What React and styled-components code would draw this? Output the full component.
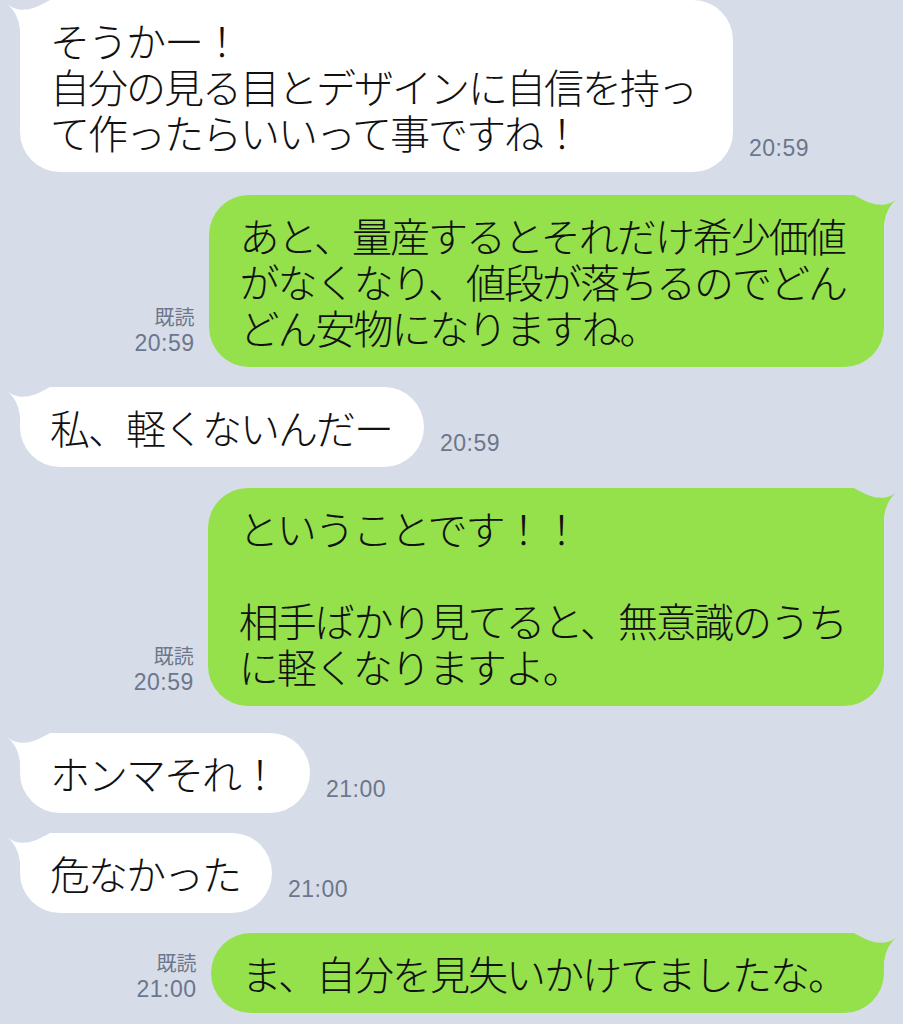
import React from 'react';
import styled, { createGlobalStyle } from 'styled-components';

const GlobalStyle = createGlobalStyle`
  html, body {
    margin: 0;
    padding: 0;
    background: #d7dde8;
  }
  body {
    width: 903px;
    height: 1024px;
    overflow: hidden;
    font-family: "Noto Sans CJK JP", sans-serif;
  }
`;

const colors = {
  in: '#ffffff',
  out: '#94e14c',
};

const Chat = styled.div`
  display: flex;
  flex-direction: column;
  padding: 0 19px 0 20px;
`;

const Row = styled.div`
  display: flex;
  align-items: flex-end;
  justify-content: ${(p) => (p.$side === 'out' ? 'flex-end' : 'flex-start')};
  gap: ${(p) => (p.$side === 'out' ? '14px' : '16px')};
  margin-top: ${(p) => p.$gap}px;
`;

const Bubble = styled.div`
  position: relative;
  box-sizing: border-box;
  background: ${(p) => colors[p.$side]};
  border-radius: 40px;
  padding: ${(p) => (p.$side === 'out' ? '17px 38px 17px 31px' : '17px 32px 17px 30px')};
  min-width: ${(p) => p.$minWidth || 0}px;
  font-family: "Noto Sans CJK JP", sans-serif;
  font-weight: 300;
  font-size: 40px;
  letter-spacing: -2px;
  line-height: 46px;
  color: #111;
  white-space: pre;
`;

const TailSvg = styled.svg`
  position: absolute;
  top: 0;
  width: 60px;
  height: 40px;
  ${(p) => (p.$side === 'out' ? 'right: -16px; transform: scaleX(-1);' : 'left: -16px;')}
`;

const Text = styled.span`
  position: relative;
`;

const Meta = styled.div`
  display: flex;
  flex-direction: column;
  align-items: ${(p) => (p.$side === 'out' ? 'flex-end' : 'flex-start')};
  padding-bottom: 11px;
  color: #6c768c;
`;

const Read = styled.span`
  font-family: "Noto Sans CJK JP", sans-serif;
  font-size: 20px;
  line-height: 26px;
`;

const Time = styled.span`
  font-family: "Liberation Sans", "Noto Sans CJK JP", sans-serif;
  font-size: 23px;
  letter-spacing: 0.5px;
  line-height: 26px;
`;

const messages = [
  { side: 'in', gap: 0, time: '20:59', minWidth: 713, text: 'そうかー！\n自分の見る目とデザインに自信を持っ\nて作ったらいいって事ですね！' },
  { side: 'out', gap: 23, time: '20:59', read: true, text: 'あと、量産するとそれだけ希少価値\nがなくなり、値段が落ちるのでどん\nどん安物になりますね。' },
  { side: 'in', gap: 20, time: '20:59', text: '私、軽くないんだー' },
  { side: 'out', gap: 21, time: '20:59', read: true, text: 'ということです！！\n\n相手ばかり見てると、無意識のうち\nに軽くなりますよ。' },
  { side: 'in', gap: 27, time: '21:00', text: 'ホンマそれ！' },
  { side: 'in', gap: 20, time: '21:00', text: '危なかった' },
  { side: 'out', gap: 20, time: '21:00', read: true, text: 'ま、自分を見失いかけてましたな。' },
];

const Tail = ({ side }) => (
  <TailSvg $side={side} viewBox="0 0 60 40">
    <path
      d="M2 3 Q18 18 46 0 L60 0 L60 40 L16 40 L16 29 Q14 12 2 3 Z"
      fill={colors[side]}
    />
  </TailSvg>
);

const Message = ({ side, gap, time, read, text, minWidth }) => {
  const meta = (
    <Meta $side={side}>
      {read && <Read>既読</Read>}
      <Time>{time}</Time>
    </Meta>
  );

  return (
    <Row $side={side} $gap={gap}>
      {side === 'out' && meta}
      <Bubble $side={side} $minWidth={minWidth}>
        <Tail side={side} />
        <Text>{text}</Text>
      </Bubble>
      {side === 'in' && meta}
    </Row>
  );
};

const App = () => (
  <>
    <GlobalStyle />
    <Chat>
      {messages.map((m, i) => (
        <Message key={i} {...m} />
      ))}
    </Chat>
  </>
);

export default App;
